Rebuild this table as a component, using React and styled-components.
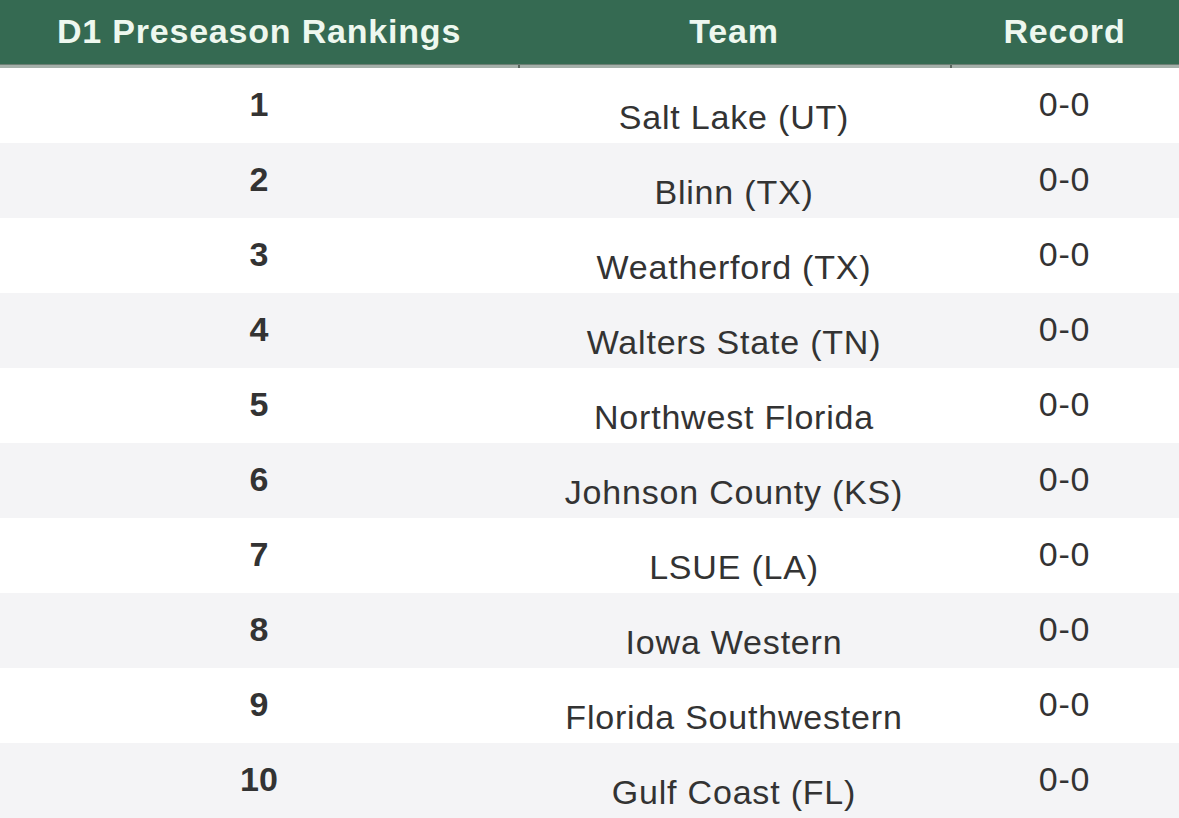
import React from 'react';
import styled, { createGlobalStyle } from 'styled-components';

const teams = [
    { rank: 1, name: 'Salt Lake (UT)', record: '0-0' },
    { rank: 2, name: 'Blinn (TX)', record: '0-0' },
    { rank: 3, name: 'Weatherford (TX)', record: '0-0' },
    { rank: 4, name: 'Walters State (TN)', record: '0-0' },
    { rank: 5, name: 'Northwest Florida', record: '0-0' },
    { rank: 6, name: 'Johnson County (KS)', record: '0-0' },
    { rank: 7, name: 'LSUE (LA)', record: '0-0' },
    { rank: 8, name: 'Iowa Western', record: '0-0' },
    { rank: 9, name: 'Florida Southwestern', record: '0-0' },
    { rank: 10, name: 'Gulf Coast (FL)', record: '0-0' }
];

const App = () => {
    return (
        <>
            <GlobalStyle />
            <Table>
                <HeaderRow>
                    <HeaderCell>D1 Preseason Rankings</HeaderCell>
                    <HeaderCell $divider>Team</HeaderCell>
                    <HeaderCell $divider>Record</HeaderCell>
                </HeaderRow>
                {teams.map((team, i) => (
                    <Row key={team.rank} $striped={i % 2 === 1}>
                        <Rank>{team.rank}</Rank>
                        <TeamName>{team.name}</TeamName>
                        <Record>{team.record}</Record>
                    </Row>
                ))}
            </Table>
        </>
    );
};

export default App;

const GlobalStyle = createGlobalStyle`
    html, body {
        margin: 0;
        padding: 0;
        background: #ffffff;
    }
    body {
        font-family: "Liberation Sans", Arial, sans-serif;
        overflow: hidden;
    }
`;

const Table = styled.div`
    width: 1179px;
    height: 818px;
    display: flex;
    flex-direction: column;
    overflow: hidden;
`;

const columns = `
    display: grid;
    grid-template-columns: 518px 432px 229px;
`;

const HeaderRow = styled.div`
    ${columns}
    height: 65px;
    background-color: #356a52;
    border-bottom: 3px solid #a5b0aa;
    box-shadow: inset 0 -1px 0 #6c7f74;
`;

const HeaderCell = styled.div`
    display: flex;
    align-items: center;
    justify-content: center;
    padding-bottom: 3px;
    color: #eef8ef;
    font-size: 34px;
    font-weight: bold;
    letter-spacing: 0.8px;
    position: relative;

    &::before {
        content: '';
        display: ${props => (props.$divider ? 'block' : 'none')};
        position: absolute;
        left: 0;
        bottom: -3px;
        width: 2px;
        height: 3px;
        background: #59665e;
    }
`;

const Row = styled.div`
    ${columns}
    height: 75px;
    flex-shrink: 0;
    background-color: ${props => (props.$striped ? '#f4f4f6' : '#ffffff')};
    color: #333333;
    font-size: 34px;
    letter-spacing: 0.8px;
`;

const Cell = styled.div`
    display: flex;
    justify-content: center;
    align-items: center;
`;

const Rank = styled(Cell)`
    font-weight: bold;
    letter-spacing: 0;
    padding-bottom: 2px;
`;

const TeamName = styled(Cell)`
    padding-top: 23px;
`;

const Record = styled(Cell)`
    padding-bottom: 3px;
`;
